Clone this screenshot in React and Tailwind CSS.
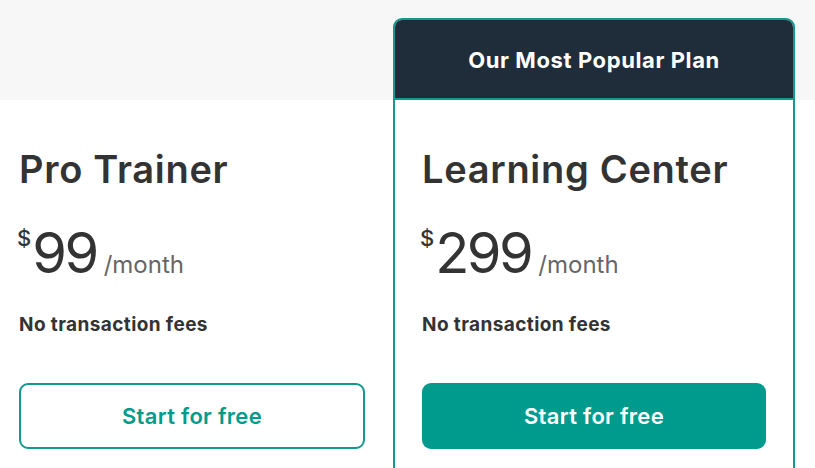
import React from 'react';

const plans = [
  { name: 'Pro Trainer', price: '99', popular: false },
  { name: 'Learning Center', price: '299', popular: true },
];

const PlanBody = ({ plan }) => (
  <div className="flex flex-col">
    <h2 className="text-[38px] font-semibold leading-none text-[#333333] tracking-[0.7px] mt-[50px]">
      {plan.name}
    </h2>
    <div className="flex items-baseline h-[56px] mt-[37px] -ml-[2px]">
      <span className="text-[22px] font-medium leading-none text-[#333333] self-start mt-[2px] mr-[1px]">$</span>
      <span className="text-[56px] leading-none text-[#333333] tracking-[-2.5px]">{plan.price}</span>
      <span className="text-[24px] leading-none text-[#666666] ml-[7px]">/month</span>
    </div>
    <p className="text-[19px] font-bold text-[#333333] tracking-[0.4px] mt-[34px] leading-none">No transaction fees</p>
    {plan.popular ? (
      <button className="mt-[49px] h-[66px] rounded-[9px] bg-[#009b8c] text-white text-[22px] font-semibold tracking-[0.3px]">
        Start for free
      </button>
    ) : (
      <button className="mt-[49px] h-[66px] rounded-[9px] border-2 border-[#13998e] bg-white text-[#009b8c] text-[22px] font-semibold tracking-[0.3px]">
        Start for free
      </button>
    )}
  </div>
);

export default function App() {
  return (
    <div className="relative w-[815px] h-[468px] overflow-hidden bg-white" style={{ fontFamily: 'Inter, "Noto Sans", sans-serif' }}>
      <div className="absolute inset-x-0 top-0 h-[100px] bg-[#f7f7f7]" />
      <div className="relative flex">
        <div className="w-[393px] pl-[19px] pr-[28px] pt-[100px]">
          <PlanBody plan={plans[0]} />
        </div>
        <div className="w-[402px] mt-[18px] h-[480px] rounded-t-[9px] border-2 border-[#13998e] bg-white overflow-hidden">
          <div className="h-[80px] bg-[#1f2d3a] border-b-2 border-[#13998e] flex items-center justify-center pt-[3px]">
            <span className="text-white text-[22px] font-bold tracking-[0.6px]">Our Most Popular Plan</span>
          </div>
          <div className="px-[27px]">
            <PlanBody plan={plans[1]} />
          </div>
        </div>
      </div>
    </div>
  );
}
